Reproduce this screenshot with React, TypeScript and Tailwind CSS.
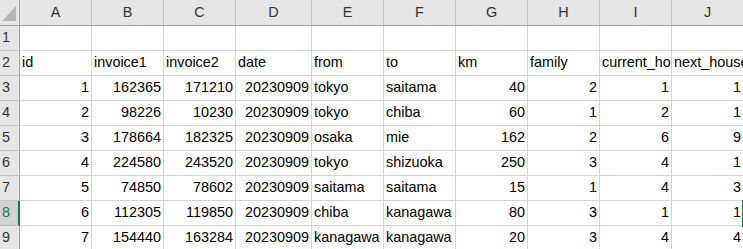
import React from 'react';

const cols = [
  { key: 'A', w: 'w-[72px]' },
  { key: 'B', w: 'w-[72px]' },
  { key: 'C', w: 'w-[72px]' },
  { key: 'D', w: 'w-[76px]' },
  { key: 'E', w: 'w-[72px]' },
  { key: 'F', w: 'w-[72px]' },
  { key: 'G', w: 'w-[72px]' },
  { key: 'H', w: 'w-[72px]' },
  { key: 'I', w: 'w-[72px]' },
  { key: 'J', w: 'w-[72px]' },
];

const rows: (string | number)[][] = [
  [],
  ['id', 'invoice1', 'invoice2', 'date', 'from', 'to', 'km', 'family', 'current_house', 'next_house'],
  [1, 162365, 171210, 20230909, 'tokyo', 'saitama', 40, 2, 1, 1],
  [2, 98226, 10230, 20230909, 'tokyo', 'chiba', 60, 1, 2, 1],
  [3, 178664, 182325, 20230909, 'osaka', 'mie', 162, 2, 6, 9],
  [4, 224580, 243520, 20230909, 'tokyo', 'shizuoka', 250, 3, 4, 1],
  [5, 74850, 78602, 20230909, 'saitama', 'saitama', 15, 1, 4, 3],
  [6, 112305, 119850, 20230909, 'chiba', 'kanagawa', 80, 3, 1, 1],
  [7, 154440, 163284, 20230909, 'kanagawa', 'kanagawa', 20, 3, 4, 4],
];

export default function App() {
  return (
    <div className="relative w-[743px] h-[249px] overflow-hidden bg-white text-[14.4px] text-black font-['Liberation_Sans',Arial,sans-serif]">
      {/* column letters */}
      <div className="flex h-[26px] bg-[#e6e6e6] border-b border-[#a0a0a0]">
        <div className="w-[20px] shrink-0 border-r border-[#a0a0a0] relative">
          <svg className="absolute left-0 top-0" width="19" height="25" viewBox="0 0 19 25">
            <polygon points="2,21 16,21 16,6" fill="#b4b4b4" />
          </svg>
        </div>
        {cols.map((c) => (
          <div
            key={c.key}
            className={`${c.w} shrink-0 border-r border-[#c6c6c6] flex items-center justify-center text-[#333]`}
          >
            {c.key}
          </div>
        ))}
      </div>

      {rows.map((r, i) => {
        const active = i === 7;
        return (
          <div key={i} className="flex h-[25px]">
            <div
              className={
                active
                  ? 'w-[20px] shrink-0 bg-[#d2d2d2] border-r-2 border-b border-r-[#217346] border-b-[#bdbdbd] text-[#217346] flex items-center pl-[2px]'
                  : 'w-[20px] shrink-0 bg-[#e6e6e6] border-r border-b border-r-[#a0a0a0] border-b-[#c6c6c6] text-[#333] flex items-center pl-[2px]'
              }
            >
              {i + 1}
            </div>
            {cols.map((c, j) => {
              const v = r[j];
              const num = typeof v === 'number';
              return (
                <div
                  key={c.key}
                  className={`${c.w} shrink-0 border-r border-b border-[#d4d4d4] flex items-center overflow-hidden whitespace-nowrap ${
                    num ? 'justify-end pr-[2px]' : 'pl-[2px]'
                  }`}
                >
                  {v ?? ''}
                </div>
              );
            })}
          </div>
        );
      })}

      {/* active cell edge (K8) */}
      <div className="absolute left-[742px] top-[200px] w-[2px] h-[27px] bg-[#217346]" />
    </div>
  );
}
